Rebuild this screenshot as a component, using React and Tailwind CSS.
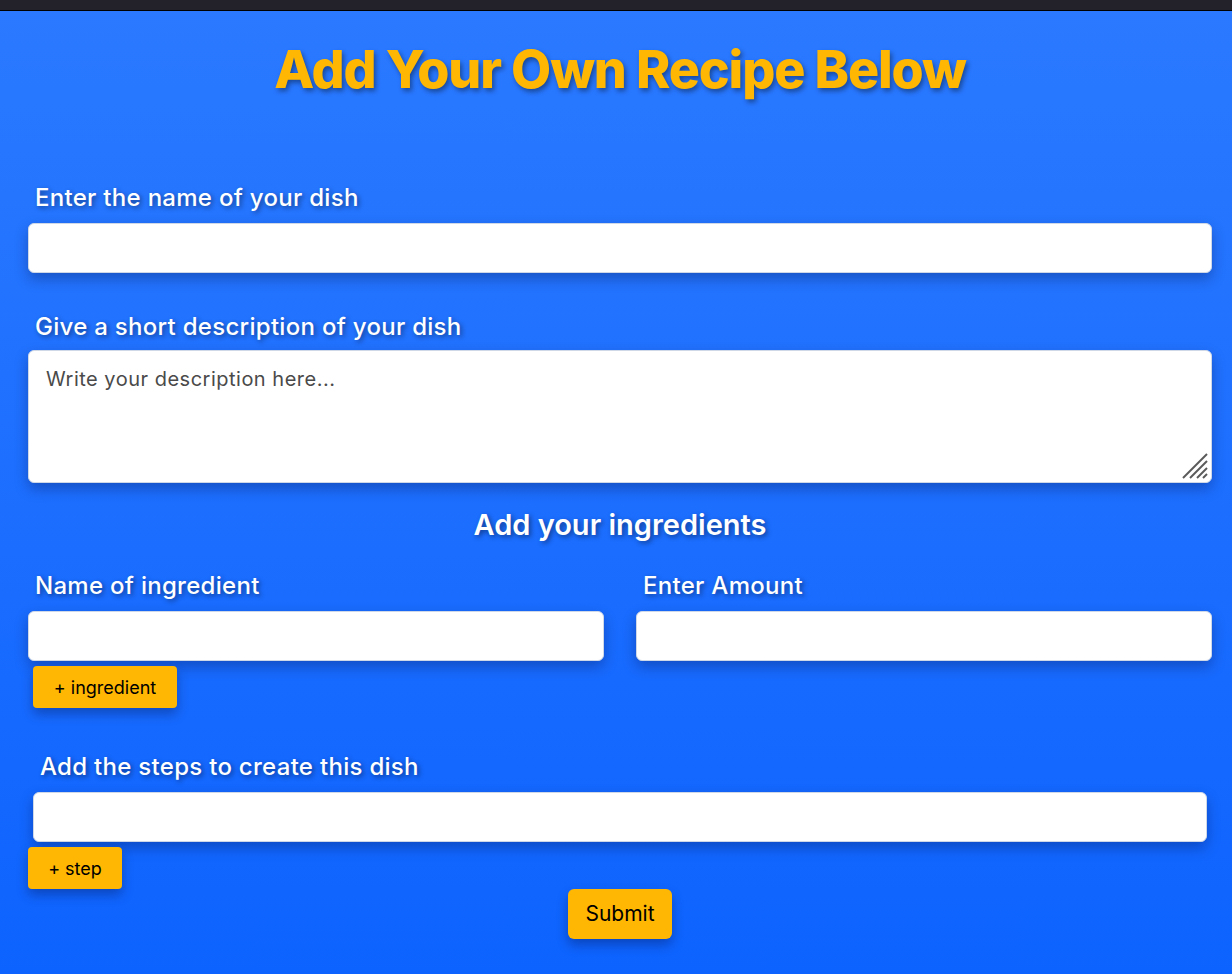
import React from 'react';

const label = 'block text-[24px] leading-[33px] tracking-[0.012em] text-white font-medium [text-shadow:2px_2px_5px_rgba(0,0,0,0.45)]';
const field = 'block w-full h-[50px] rounded-md bg-white border border-[#cfd8e6] shadow-[0_6px_14px_rgba(0,0,40,0.28)] outline-none';
const btn = 'bg-[#ffb703] text-black rounded shadow-[0_6px_12px_rgba(0,0,40,0.3)]';

function ResizeGrip() {
  return (
    <svg className="absolute right-[3px] bottom-[3px] pointer-events-none" width="27" height="27" viewBox="0 0 27 27">
      <g stroke="#5a5a5a" strokeWidth="2" strokeLinecap="butt">
        <line x1="1" y1="25" x2="25" y2="1" />
        <line x1="8" y1="25" x2="25" y2="8" />
        <line x1="15" y1="25" x2="25" y2="15" />
        <line x1="21" y1="25" x2="25" y2="21" />
      </g>
    </svg>
  );
}

export default function App() {
  return (
    <div className="h-[974px] overflow-hidden flex flex-col font-['Inter',sans-serif]">
      <div className="h-[11px] bg-[#23222b] border-b border-black" />
      <div className="flex-1 bg-gradient-to-b from-[#2a79ff] to-[#0d63ff] pl-7 pr-5">
        <h1 className="text-center text-[#ffb703] font-extrabold text-[52px] leading-none tracking-[-0.022em] pt-[33px] [text-shadow:2px_3px_5px_rgba(0,0,0,0.4)]">
          Add Your Own Recipe Below
        </h1>

        <form className="mt-[85px]" onSubmit={(e) => e.preventDefault()}>
          <label className={`${label} pl-[7px] mb-[9px]`}>Enter the name of your dish</label>
          <input type="text" className={field} />

          <label className={`${label} pl-[7px] mt-[37px] mb-[7px]`}>Give a short description of your dish</label>
          <div className="relative">
            <textarea
              className="block w-full h-[133px] rounded-md bg-white border border-[#cfd8e6] shadow-[0_6px_14px_rgba(0,0,40,0.28)] outline-none px-[17px] pt-[13px] text-[20px] tracking-[0.025em] text-[#333] placeholder:text-[#4a4a4a] resize-none"
              placeholder="Write your description here..."
            />
            <ResizeGrip />
          </div>

          <h2 className="text-center text-white font-semibold text-[29px] leading-[40px] mt-[22px] [text-shadow:2px_2px_5px_rgba(0,0,0,0.45)]">
            Add your ingredients
          </h2>

          <div className="grid grid-cols-2 gap-8 mt-[24px]">
            <div>
              <label className={`${label} pl-[7px] mb-[9px]`}>Name of ingredient</label>
              <input type="text" className={field} />
            </div>
            <div>
              <label className={`${label} pl-[7px] mb-[9px]`}>Enter Amount</label>
              <input type="text" className={field} />
            </div>
          </div>
          <button type="button" className={`${btn} ml-[5px] mt-[5px] w-[144px] h-[42px] text-[18px]`}>
            + ingredient
          </button>

          <div className="px-[5px] mt-[42px]">
            <label className={`${label} pl-[7px] mb-[9px]`}>Add the steps to create this dish</label>
            <input type="text" className={field} />
          </div>
          <button type="button" className={`${btn} mt-[5px] w-[94px] h-[42px] text-[18px]`}>
            + step
          </button>

          <div className="flex justify-center">
            <button type="submit" className={`${btn} rounded-md w-[104px] h-[50px] text-[21px]`}>
              Submit
            </button>
          </div>
        </form>
      </div>
    </div>
  );
}
